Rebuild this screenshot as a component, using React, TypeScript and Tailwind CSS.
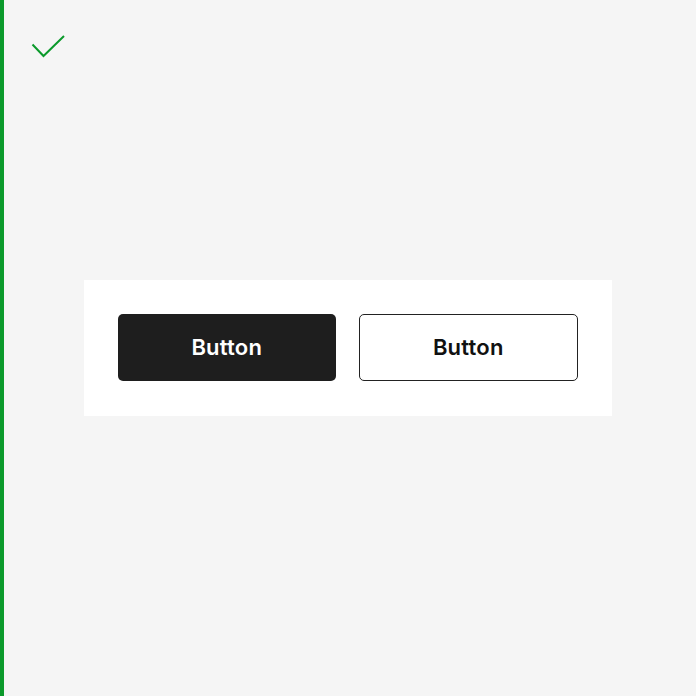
export default function App() {
  return (
    <div className="w-[696px] h-[696px] bg-[#f5f5f5] flex border-l-4 border-[#0b9a2b]" style={{ fontFamily: "Inter, 'Noto Sans', sans-serif" }}>
      <div className="flex-1 flex flex-col">
        <div className="h-[280px] relative">
          <svg className="absolute left-[26px] top-[33px]" width="36" height="28" viewBox="0 0 36 28">
            <path d="M2.5 11.5 L13.5 23 L34 3" fill="none" stroke="#0b9a2b" strokeWidth="2" />
          </svg>
        </div>
        <div className="ml-[80px] w-[528px] bg-white pt-[34px] px-[34px] pb-[35px] flex gap-[23px]">
          <button className="flex-1 h-[67px] rounded-[5px] bg-[#1e1e1e] text-white text-[22px] font-semibold tracking-[0.2px]">Button</button>
          <button className="flex-1 h-[67px] rounded-[5px] bg-white border-[1.5px] border-[#222] text-[#111] text-[22px] font-semibold tracking-[0.2px]">Button</button>
        </div>
      </div>
    </div>
  );
}
